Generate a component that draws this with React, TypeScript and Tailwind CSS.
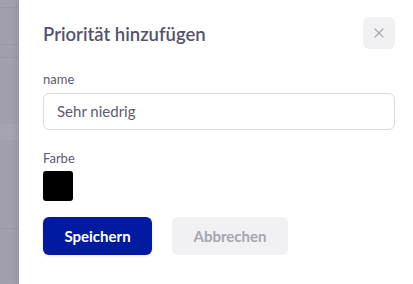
import { X } from "lucide-react";

export default function App() {
  return (
    <div className="flex h-[284px] w-[413px] overflow-hidden bg-[#a19fad]" style={{ fontFamily: "Lato, 'Noto Sans', sans-serif" }}>
      {/* dimmed page behind the drawer */}
      <div className="flex w-[19px] shrink-0 flex-col">
        <div className="h-[8px] border-b border-[#98969f]" />
        <div className="h-[37px] border-b border-[#98969f]" />
        <div className="h-[13px] border-b border-[#98969f]" />
        <div className="h-[66px]" />
        <div className="h-[16px] bg-[#a5a3b0]" />
        <div className="h-[89px] border-b border-[#98969f]" />
        <div className="flex-1" />
      </div>

      <div className="flex flex-1 flex-col bg-white pl-[24px] pr-[18px] pt-[17px] shadow-[-2px_0_6px_rgba(0,0,0,0.08)]">
        <div className="flex items-start justify-between">
          <h2 className="pt-[5px] text-[18.5px] font-semibold leading-[24px] text-[#55536b]">Priorität hinzufügen</h2>
          <button className="flex h-[32px] w-[32px] items-center justify-center rounded-md bg-[#f1f1f3] text-[#a6a5b0]">
            <X size={16} strokeWidth={1.6} />
          </button>
        </div>

        <label className="mt-[22px] text-[13px] leading-[16px] text-[#5d5b6e]">name</label>
        <div className="mt-[6px] flex h-[37px] items-center rounded-md border border-[#dcdce0] px-[13px] text-[15px] text-[#5d5b6e]">
          Sehr niedrig
        </div>

        <label className="mt-[20px] text-[13px] leading-[16px] text-[#5d5b6e]">Farbe</label>
        <div className="mt-[5px] h-[30px] w-[30px] rounded-[3px] bg-black" />

        <div className="mt-[16px] flex gap-[20px]">
          <button className="h-[38px] w-[109px] rounded-md bg-[#001aa0] text-[15px] font-bold text-white shadow-[0_1px_3px_rgba(0,0,0,0.1)]">
            Speichern
          </button>
          <button className="h-[38px] w-[116px] rounded-md bg-[#f1f1f3] text-[15px] font-bold text-[#a6a5b2]">
            Abbrechen
          </button>
        </div>
      </div>
    </div>
  );
}
